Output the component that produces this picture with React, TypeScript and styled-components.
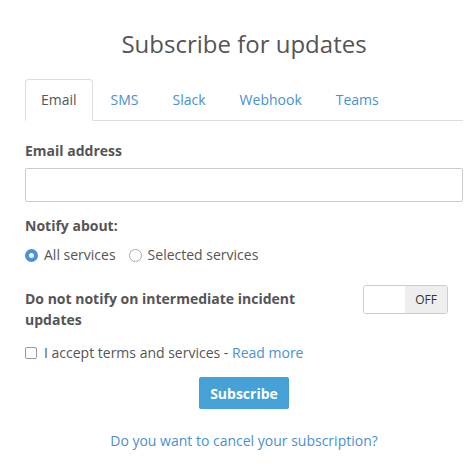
import React, { useState } from 'react';
import styled, { createGlobalStyle } from 'styled-components';

const GlobalStyle = createGlobalStyle`
  body {
    margin: 0;
    background: #fff;
    font-family: 'Open Sans', 'Liberation Sans', sans-serif;
    color: #555;
  }
`;

const Wrapper = styled.div`
  width: 474px;
  box-sizing: border-box;
  padding: 27px 11px 0 25px;
`;

const Title = styled.h1`
  margin: 0;
  text-align: center;
  font-size: 24px;
  font-weight: 400;
  line-height: 34px;
  color: #555;
`;

const TabBar = styled.ul`
  list-style: none;
  display: flex;
  margin: 18px 0 0;
  padding: 0;
  border-bottom: 1px solid #ddd;
`;

const Tab = styled.li<{ active?: boolean }>`
  margin: 0 2px -1px 0;
  padding: 10px 15px;
  font-size: 14px;
  line-height: 20px;
  border: 1px solid ${(p) => (p.active ? '#ddd' : 'transparent')};
  border-bottom-color: ${(p) => (p.active ? '#fff' : 'transparent')};
  border-radius: 4px 4px 0 0;
  background: ${(p) => (p.active ? '#fff' : 'transparent')};
  color: ${(p) => (p.active ? '#555' : '#4a90d2')};
  cursor: pointer;
`;

const Form = styled.form`
  display: flex;
  flex-direction: column;
  padding-top: 20px;
`;

const Label = styled.label`
  font-size: 14px;
  font-weight: 700;
  line-height: 20px;
  color: #555;
`;

const Input = styled.input`
  margin-top: 7px;
  height: 34px;
  box-sizing: border-box;
  border: 1px solid #ccc;
  border-radius: 2px;
  padding: 6px 12px;
  font-size: 14px;
  font-family: inherit;
`;

const Group = styled.div`
  margin-top: 12px;
`;

const RadioRow = styled.div`
  display: flex;
  gap: 13px;
  margin-top: 9px;
`;

const Option = styled.label`
  display: flex;
  align-items: center;
  gap: 6px;
  font-size: 14px;
  line-height: 20px;
  color: #555;
`;

const Radio = styled.span<{ checked?: boolean }>`
  width: 13px;
  height: 13px;
  box-sizing: border-box;
  border-radius: 50%;
  border: ${(p) => (p.checked ? '4px solid #4a90e2' : '1px solid #aaa')};
  background: #fff;
`;

const ToggleRow = styled.div`
  display: flex;
  justify-content: space-between;
  align-items: flex-start;
  margin-top: 23px;
`;

const ToggleLabel = styled(Label)`
  width: 290px;
  line-height: 21px;
`;

const Toggle = styled.div`
  display: flex;
  width: 85px;
  height: 29px;
  box-sizing: border-box;
  margin: -3px 15px 0 0;
  border: 1px solid #ccc;
  border-radius: 3px;
  overflow: hidden;
`;

const ToggleKnob = styled.span`
  flex: 1;
  background: #fff;
`;

const ToggleOff = styled.span`
  width: 42px;
  display: flex;
  align-items: center;
  justify-content: center;
  background: #eee;
  color: #333;
  font-size: 12px;
`;

const CheckRow = styled(Option)`
  gap: 7px;
  margin-top: 13px;
`;

const Checkbox = styled.span`
  width: 12px;
  height: 12px;
  box-sizing: border-box;
  border: 1px solid #999;
  border-radius: 2px;
`;

const Link = styled.a`
  color: #4a90d2;
  text-decoration: none;
`;

const Button = styled.button`
  align-self: center;
  margin-top: 14px;
  width: 90px;
  height: 32px;
  border: none;
  border-radius: 2px;
  background: #45a1d6;
  color: #fff;
  font-family: inherit;
  font-size: 14px;
  font-weight: 700;
`;

const Cancel = styled(Link)`
  align-self: center;
  margin-top: 22px;
  font-size: 14px;
  line-height: 20px;
`;

const tabs = ['Email', 'SMS', 'Slack', 'Webhook', 'Teams'];

const App: React.FC = () => {
  const [tab, setTab] = useState('Email');
  const [all, setAll] = useState(true);

  return (
    <Wrapper>
      <GlobalStyle />
      <Title>Subscribe for updates</Title>
      <TabBar>
        {tabs.map((t) => (
          <Tab key={t} active={t === tab} onClick={() => setTab(t)}>
            {t}
          </Tab>
        ))}
      </TabBar>
      <Form onSubmit={(e) => e.preventDefault()}>
        <Label>Email address</Label>
        <Input type="email" />
        <Group>
          <Label>Notify about:</Label>
          <RadioRow>
            <Option onClick={() => setAll(true)}>
              <Radio checked={all} />
              All services
            </Option>
            <Option onClick={() => setAll(false)}>
              <Radio checked={!all} />
              Selected services
            </Option>
          </RadioRow>
        </Group>
        <ToggleRow>
          <ToggleLabel>Do not notify on intermediate incident updates</ToggleLabel>
          <Toggle>
            <ToggleKnob />
            <ToggleOff>OFF</ToggleOff>
          </Toggle>
        </ToggleRow>
        <CheckRow>
          <Checkbox />
          <span>
            I accept terms and services - <Link href="#">Read more</Link>
          </span>
        </CheckRow>
        <Button type="submit">Subscribe</Button>
        <Cancel href="#">Do you want to cancel your subscription?</Cancel>
      </Form>
    </Wrapper>
  );
};

export default App;
